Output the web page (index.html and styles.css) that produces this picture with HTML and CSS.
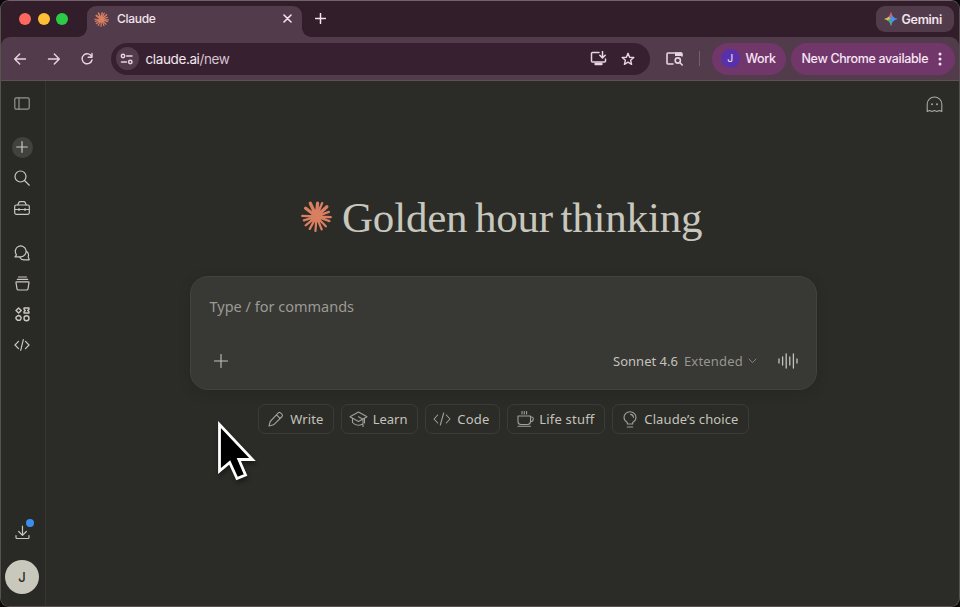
FILE: index.html
```html
<!DOCTYPE html>
<html lang="en">
<head>
<meta charset="utf-8">
<title>Claude</title>
<link rel="stylesheet" href="styles.css">
</head>
<body>
<div class="window">
  <header class="tabbar">
    <div class="lights"><i class="red"></i><i class="yellow"></i><i class="green"></i></div>
    <div class="tab">
      <svg class="burst" width="15" height="15" viewBox="0 0 30 30"><use href="#burst"/></svg>
      <span class="tab-title">Claude</span>
      <svg class="close" width="9" height="9" viewBox="0 0 9 9"><path d="M1 1l7 7M8 1L1 8"/></svg>
    </div>
    <svg class="newtab" width="11" height="11" viewBox="0 0 11 11"><path d="M5.5 .5v10M.5 5.5h10"/></svg>
    <div class="gemini">
      <svg width="14" height="14" viewBox="0 0 14 14">
        <defs><clipPath id="spark"><path d="M7 0C7.8 4 10 6.2 14 7 10 7.8 7.8 10 7 14 6.200 10 4 7.800 0 7 4 6.200 6.200 4 7 0Z"/></clipPath></defs>
        <g clip-path="url(#spark)"><path fill="#4a90ec" d="M0 0h14v14H0z"/><path fill="#e85e50" d="M3 0h6L6.500 6 3 4z"/><path fill="#f0bd3c" d="M0 3l4 1 2.500 3L4 9H0z"/><path fill="#4eae6c" d="M3 8l3-1 2.500 7H3z"/></g>
      </svg>
      <span>Gemini</span>
    </div>
  </header>

  <div class="toolbar">
    <svg class="nav" width="14" height="14" viewBox="0 0 14 14"><path d="M12.500 7H2M6.700 2L1.700 7l5 5"/></svg>
    <svg class="nav" width="14" height="14" viewBox="0 0 14 14"><path d="M1.500 7H12M7.300 2l5 5-5 5"/></svg>
    <svg class="nav" width="14" height="14" viewBox="0 0 14 14"><path d="M11.700 4.700A5 5 0 1 0 12 8M12 1.500v3.800H8.200"/></svg>
    <div class="address">
      <div class="site"><svg width="14" height="12" viewBox="0 0 14 12"><circle cx="3" cy="3" r="1.700"/><path d="M6.700 3H12M1.500 9h5"/><circle cx="10.300" cy="9" r="1.700"/></svg></div>
      <span class="url">claude.ai<b>/new</b></span>
      <svg class="install" width="17" height="15" viewBox="0 0 17 15"><path d="M9 1.500H2.500q-1 0-1 1v7.500q0 1 1 1h12q1 0 1-1V8M12.500 .5v6M9.800 4.200l2.700 2.700 2.700-2.700"/><path class="stand" d="M5.500 13h6"/></svg>
      <svg class="star" width="14" height="14" viewBox="0 0 14 14"><path d="M7 1.300l1.600 3.900 4.200.3-3.200 2.700 1 4.100L7 10.100l-3.600 2.200 1-4.100-3.200-2.700 4.200-.3z"/></svg>
    </div>
    <svg class="panel" width="17" height="15" viewBox="0 0 17 15"><path d="M7 13H2q-1 0-1-1V3q0-1 1-1h13q1 0 1 1v2"/><path class="solid" d="M9 1.500h7V5H9z"/><circle cx="11.800" cy="9.500" r="2.600"/><path d="M13.800 11.500l2.400 2.500"/></svg>
    <span class="divider"></span>
    <div class="profile"><span class="initial">J</span><span>Work</span></div>
    <div class="update"><span>New Chrome available</span><svg width="4" height="14" viewBox="0 0 4 14"><circle cx="2" cy="2" r="1.500"/><circle cx="2" cy="7" r="1.500"/><circle cx="2" cy="12" r="1.500"/></svg></div>
  </div>

  <div class="body">
    <nav class="sidebar">
      <div class="slot toggle"><svg width="16" height="13" viewBox="0 0 16 13"><rect x=".8" y=".8" width="14.400" height="11.400" rx="1.500"/><path d="M5 1v11"/></svg></div>
      <div class="slot"><span class="plus"><svg width="12" height="12" viewBox="0 0 12 12"><path d="M6 .7v10.600M.7 6h10.600"/></svg></span></div>
      <div class="slot"><svg width="16" height="16" viewBox="0 0 16 16"><circle cx="6.500" cy="6.500" r="5.500"/><path d="M10.500 10.500l4.800 4.700"/></svg></div>
      <div class="slot"><svg width="16" height="14" viewBox="0 0 16 14"><rect x=".7" y="4" width="14.600" height="9.300" rx="1.500"/><path d="M3.800 4l.9-2.200Q5.200.7 6.200.7h3.600q1 0 1.500 1.100l.9 2.200M1 8.500h14M5 7.500v2M11 7.500v2"/></svg></div>
      <div class="slot group"><svg width="16" height="16" viewBox="0 0 16 16"><path d="M1 11.800l1.500-2A5.400 5.400 0 1 1 6.800 11.800zM13 6.700q2.300 2 1.200 5.200l1 2.900H10q-3 0-4.400-2.500"/></svg></div>
      <div class="slot"><svg width="15" height="15" viewBox="0 0 15 15"><path d="M3.500 1h8M2.300 3.300h10.400M1.700 5.800h11.600q.8 0 .7.800l-1 6.200q-.2 1.200-1.300 1.200H3.300q-1.100 0-1.300-1.200L1 6.600Q.9 5.800 1.700 5.800z"/></svg></div>
      <div class="slot"><svg class="apps" width="15" height="15" viewBox="0 0 15 15"><path d="M3.600 .9l2.600 2.600-2.600 2.600L1 3.500zM9 1h5v1.300l-1.300 1.200L14 4.700V6H9V4.700l1.300-1.200L9 2.300z"/><path d="M2.400 9l1.200-.5L5 9l1 1.300v1.500L4.900 13.300H2.500L1 11.700v-1.500z"/><circle cx="11.500" cy="11.200" r="2.500"/></svg></div>
      <div class="slot"><svg width="16" height="12" viewBox="0 0 16 12"><path d="M4.500 2.300L1 6l3.500 3.700M11.500 2.300L15 6l-3.500 3.700M9.300.7l-2.600 10.600"/></svg></div>
      <div class="slot download"><svg width="15" height="15" viewBox="0 0 15 15"><path d="M7.500 1v9M3.700 6.500l3.800 3.800 3.800-3.800M1 10.500v2q0 1 1 1h11q1 0 1-1v-2"/></svg><i class="dot"></i></div>
      <div class="avatar">J</div>
    </nav>

    <main class="content">
      <svg class="ghost" width="17" height="17" viewBox="0 0 17 17"><path d="M1.200 15.500V8a7.300 7 0 0 1 14.600 0v7.500l-2.400-1-2.400 1-2.500-1-2.500 1-2.400-1z"/><path class="eye" d="M6 8.200h.01M11 8.200h.01"/></svg>
      <h1 class="greeting"><svg width="31" height="31" viewBox="0 0 30 30"><use href="#burst"/></svg><span>Golden hour thinking</span></h1>
      <section class="composer">
        <div class="prompt">Type / for commands</div>
        <div class="controls">
          <svg class="add" width="14" height="14" viewBox="0 0 14 14"><path d="M7 .5v13M.5 7h13"/></svg>
          <span class="model">Sonnet 4.6</span>
          <span class="mode">Extended</span>
          <svg class="chevron" width="9" height="6" viewBox="0 0 9 6"><path d="M1 1l3.500 3.700L8 1"/></svg>
          <svg class="voice" width="20" height="16" viewBox="0 0 20 16"><path d="M1 6v4M4.600 4v8M8.200 1v14M11.800 4v8M15.400 1v14M19 6v4"/></svg>
        </div>
      </section>
      <div class="chips">
        <div class="chip write"><svg width="16" height="16" viewBox="0 0 16 16"><path d="M1 15l1.200-4.500L10.300 1.900q1-1 2.200 0l1.400 1.300q1.200 1.200.2 2.300L5.600 13.800zM8.500 3.800l3.700 3.700"/></svg><span>Write</span></div>
        <div class="chip learn"><svg width="19" height="16" viewBox="0 0 19 16"><path d="M1 5.800L9.500 1 18 5.800 9.500 10.500zM3.500 7.500v4q2.500 2.800 6 2.800 2 0 3.500-1M9.500 5.800l4.500 2.500V16M15.500 7.500V12"/></svg><span>Learn</span></div>
        <div class="chip code"><svg width="18" height="14" viewBox="0 0 18 14"><path d="M4.700 3L1 7l3.700 4M13.300 3L17 7l-3.700 4M10.700 1L7.300 13"/></svg><span>Code</span></div>
        <div class="chip life"><svg width="17" height="16" viewBox="0 0 17 16"><path d="M1 5h12.500v5.500q0 3-3 3H4q-3 0-3-3zM13.500 6h1q1.800 0 1.800 1.800 0 2.700-2.800 2.900M1 15.200h12.500M5 .5V3M7.300 .5V3M9.600 .5V3"/></svg><span>Life stuff</span></div>
        <div class="chip choice"><svg width="14" height="17" viewBox="0 0 14 17"><path d="M4.300 13v-1.500Q1 9.500 1 6.500a6 5.700 0 0 1 12 0q0 3-3.300 5V13zM4.300 16h5.400M7.500 3.400q2.700.3 3 3"/></svg><span>Claude’s choice</span></div>
      </div>
    </main>
  </div>
</div>

<svg class="cursor" width="42" height="66" viewBox="0 0 42 66"><path d="M2.500 4.500v46.500L12.700 42.500l7.300 16 8.500-3.500-6.700-15.500H35.500z"/></svg>

<svg class="defs" width="0" height="0">
  <symbol id="burst" viewBox="0 0 30 30">
    <path class="rays wide" d="M15 15L9 2.200M15 15L16 2M15 15L25 5.500M15 15L4.500 7"/>
    <path class="rays" d="M15 15L20.500 2M15 15L27 10.500M15 15L28.800 15.700M15 15L27.500 19.500M15 15L24 24.500M15 15L20 27.500M15 15L14 29M15 15L8.500 27M15 15L4.500 23.500M15 15L2.800 18.800M15 15L1.200 14.500"/>
    <circle class="core" cx="15" cy="15" r="5"/>
  </symbol>
</svg>
</body>
</html>
```

FILE: styles.css
```css
* { box-sizing: border-box; }
body { margin: 0; background: #0b0809; font-family: Inter, sans-serif; overflow: hidden; }
svg { display: block; flex: none; fill: none; stroke: currentColor; stroke-width: 1.2; stroke-linecap: round; stroke-linejoin: round; }
.window { width: 960px; height: 607px; border: 1px solid #57514f; border-top-color: #73616c; border-radius: 9px; overflow: hidden; background: #2b2b27; display: flex; flex-direction: column; }
.defs { position: absolute; }
.rays { stroke: #d97f61; stroke-width: 2.200px; }
.wide { stroke-width: 3.200px; }
.core { fill: #d97f61; stroke: none; }

.tabbar { height: 36px; background: #321d2b; display: flex; align-items: flex-start; padding: 5px 5px 0 18px; color: #f1e4ec; flex: none; }
.lights { display: flex; gap: 6.500px; margin-top: 7px; width: 68px; }
.lights i { width: 12px; height: 12px; border-radius: 50%; }
.red { background: #ff675f; }
.yellow { background: #fdbf35; }
.green { background: #2bcb46; }
.tab { width: 215px; height: 31px; background: #523c4b; border-radius: 9px 9px 0 0; display: flex; align-items: center; padding: 0 10px 5px 7px; position: relative; }
.tab::before, .tab::after { content: ""; position: absolute; bottom: 0; width: 9px; height: 9px; }
.tab::before { left: -9px; background: radial-gradient(circle at 0 0, transparent 8.5px, #523c4b 9px); }
.tab::after { right: -9px; background: radial-gradient(circle at 100% 0, transparent 8.5px, #523c4b 9px); }
.tab-title { font-size: 12px; font-weight: 500; letter-spacing: -.3px; margin-left: 8px; margin-top: -2px; flex: 1; }
.close { stroke-width: 1.6; margin-top: -1px; }
.newtab { margin: 7px 0 0 13px; stroke-width: 1.5; }
.gemini { margin-left: auto; width: 78px; height: 26px; border-radius: 9px; background: #523c4b; display: flex; align-items: center; padding-left: 7.500px; gap: 4px; font-size: 12.5px; font-weight: 600; letter-spacing: -.3px; }
.gemini svg { stroke: none; }

.toolbar { height: 44px; background: #523c4b; border-bottom: 1px solid #5d5159; border-radius: 9px 9px 0 0; box-shadow: 0 -9px 0 #321d2b; display: flex; align-items: center; padding-left: 12px; color: #e8d5e1; flex: none; position: relative; clip-path: inset(0); }
.nav { stroke-width: 1.4; margin-right: 19.500px; }
.address { width: 539px; height: 32px; margin-left: -3px; border-radius: 16px; background: #372131; display: flex; align-items: center; padding: 0 15px 0 5px; }
.site { width: 23px; height: 23px; border-radius: 50%; background: #523c4b; display: flex; align-items: center; justify-content: center; }
.site svg { stroke-width: 1.5; }
.url { margin-left: 7px; font-size: 13.5px; letter-spacing: -.38px; color: #f4e7ef; flex: 1; }
.url b { font-weight: 400; color: #d8c3d0; }
.install { stroke-width: 1.5; margin-right: 14px; }
.stand { stroke-width: 2.4; }
.star { stroke-width: 1.4; }
.panel { stroke-width: 1.6; margin-left: 16px; }
.panel .solid { fill: currentColor; stroke: none; }
.divider { width: 1px; height: 15px; background: #775d6e; margin: 0 12px 0 16px; }
.profile, .update { height: 32px; border-radius: 16px; background: #71376b; color: #f8e5f5; font-size: 12.5px; font-weight: 500; letter-spacing: -.35px; display: flex; align-items: center; }
.profile { width: 74px; padding-left: 9px; gap: 6px; }
.initial { width: 19px; height: 19px; border-radius: 50%; background: #5930ac; font-size: 10.5px; font-weight: 400; display: flex; align-items: center; justify-content: center; }
.update { width: 164px; margin-left: 5px; padding: 0 13px 0 11px; justify-content: space-between; white-space: nowrap; }
.update svg { fill: currentColor; stroke: none; }

.body { flex: 1; display: flex; min-height: 0; }
.sidebar { width: 45px; border-right: 1px solid #353531; background: #292925; color: #c9c8c0; display: flex; flex-direction: column; align-items: center; padding: 7px 2px 12px 0; }
.slot { height: 30.500px; width: 30px; display: flex; align-items: center; justify-content: center; flex: none; position: relative; }
.toggle { margin-bottom: 13.500px; color: #96958d; }
.group { margin-top: 14.500px; }
.apps { stroke-width: 1.4; }
.plus { width: 21px; height: 21px; border-radius: 50%; background: #41413d; display: flex; align-items: center; justify-content: center; }
.download { margin-top: auto; }
.dot { position: absolute; right: 3px; top: 2px; width: 8px; height: 8px; border-radius: 50%; background: #3b8eed; }
.avatar { width: 34px; height: 34px; margin-top: 12.500px; border-radius: 50%; background: #c9c8bd; color: #2a2a26; display: flex; align-items: center; justify-content: center; font-size: 13px; font-weight: 500; flex: none; }

.content { flex: 1; position: relative; display: flex; flex-direction: column; align-items: center; color: #c4c3bb; font-family: "Noto Sans", sans-serif; padding-left: 1px; }
.ghost { position: absolute; top: 15px; right: 16px; color: #aaa9a1; stroke-width: 1.1; }
.eye { stroke-width: 1.9; }
.greeting { margin: 113px 2px 0 0; height: 44px; display: flex; align-items: center; gap: 10px; font: 400 43px/44px "Liberation Serif", serif; color: #c8c7be; }
.greeting span { width: 361px; white-space: nowrap; letter-spacing: -.2px; word-spacing: -3px; padding-top: 3px; }
.composer { width: 627px; height: 114px; margin-top: 38px; border: 1px solid #42423e; border-radius: 18px; background: #383834; box-shadow: 0 3px 14px rgba(0,0,0,.12); padding: 18px 18px 0 19px; display: flex; flex-direction: column; flex: none; }
.prompt { font-size: 14.5px; line-height: 22px; color: #9c9b94; }
.controls { display: flex; align-items: center; height: 20px; margin-top: 33.500px; padding-left: 4px; font-size: 13px; white-space: nowrap; }
.add { stroke-width: 1.1; }
.model { margin-left: auto; }
.mode { color: #979690; margin-left: 6px; letter-spacing: .2px; }
.chevron { color: #85847e; stroke-width: 1; margin: 0 21px 0 4.500px; }
.voice { stroke-width: 1.3; }
.chips { display: flex; gap: 7px; margin-top: 14px; }
.chip { height: 30px; border: 1px solid #3b3b37; border-radius: 7px; display: flex; align-items: center; justify-content: space-between; padding: 0 9px; font-size: 13px; white-space: nowrap; }
.chip svg { stroke-width: 1.1; color: #a09f98; }
.write { width: 76px; letter-spacing: .1px; }
.learn { width: 77px; padding-left: 7px; }
.code { width: 75px; padding-left: 7px; letter-spacing: .2px; }
.life { width: 98px; letter-spacing: .2px; }
.choice { width: 137px; padding-left: 10px; letter-spacing: .1px; }

.cursor { position: absolute; left: 217px; top: 420px; fill: #000; stroke: #fff; stroke-width: 2.800px; stroke-linejoin: miter; filter: drop-shadow(1px 3px 2px rgba(0,0,0,.4)); }
```
